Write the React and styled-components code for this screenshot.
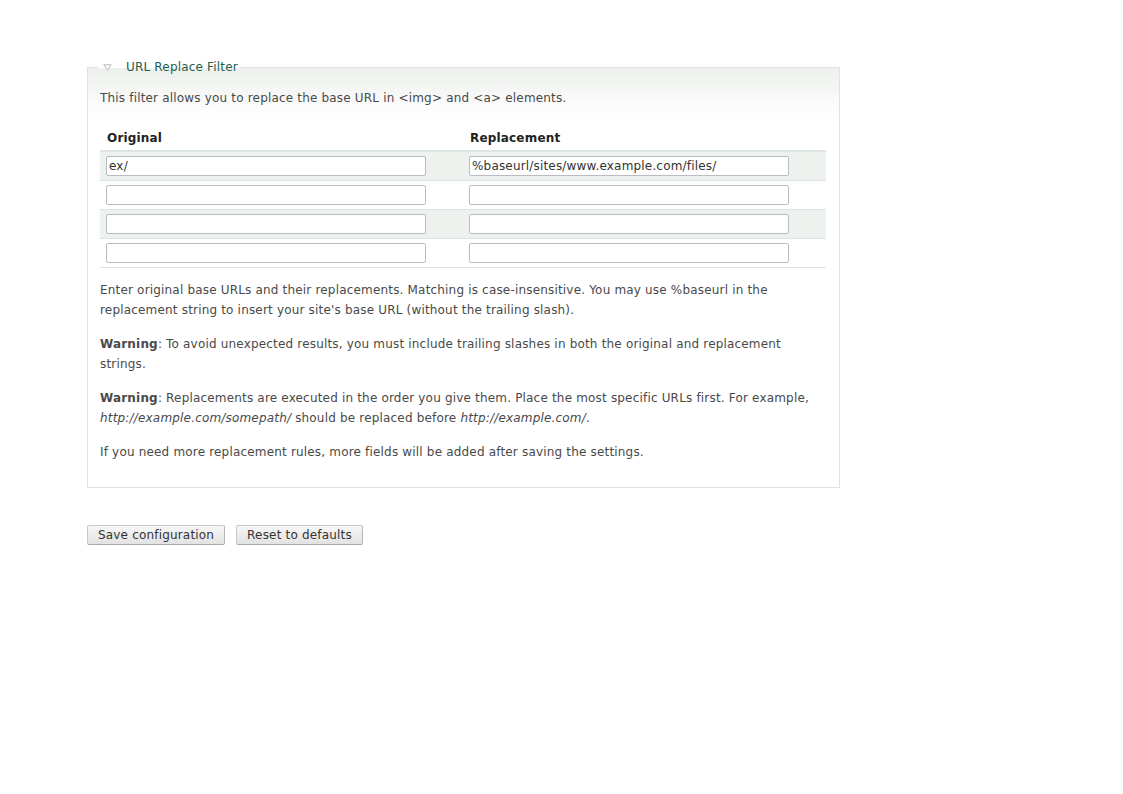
import React from "react";
import styled, { createGlobalStyle } from "styled-components";

const GlobalStyle = createGlobalStyle`
    body {
        margin : 0;
        background : #fff;
        color : #494949;
        font-family : "DejaVu Sans", Verdana, sans-serif;
        font-size : 12px;
        line-height : 20px;
        letter-spacing : 0.18px;
    }
`;

const Page = styled.div`
    padding : 57px 0 0 87px;
    width : 753px;
`;

const Fieldset = styled.fieldset`
    margin : 0;
    padding : 0 13px 11px 12px;
    border : 1px solid #dfe3df;
    background : linear-gradient(#edf0ed 0px, #ffffff 50px);
    min-width : 0;
`;

const Legend = styled.legend`
    margin-left : -2px;
    padding : 0 2px 0 5px;
    display : flex;
    align-items : center;
    gap : 14px;
    color : #1e5e4c;
    line-height : 20px;
`;

const Arrow = () => (
    <svg width="9" height="7" viewBox="0 0 9 7">
        <path d="M0.8 0.8 H8.2 L4.5 6.2 Z" fill="none" stroke="#b4b8b6" strokeWidth="1" />
    </svg>
);

const Text = styled.p`
    margin : ${(props) => props.margin || "0 0 14px"};
`;

const Table = styled.table`
    width : 100%;
    margin : 16px 0 0;
    border-collapse : collapse;
`;

const Th = styled.th`
    text-align : left;
    padding : 4px 7px 2px;
    color : #222;
    font-weight : bold;
    border-bottom : 2px solid #dce5e0;
`;

const Row = styled.tr`
    background : ${(props) => (props.shaded ? "#eef2ef" : "#fff")};
    border-bottom : 1px solid #dde4df;
`;

const Td = styled.td`
    padding : 4px 6px 4px 6px;
    width : ${(props) => props.width || "auto"};
`;

const Input = styled.input`
    box-sizing : border-box;
    width : 320px;
    height : 20px;
    margin : 0;
    padding : 0 2px;
    border : 1px solid #b9bdc1;
    border-radius : 2px;
    font-family : "DejaVu Sans", Verdana, sans-serif;
    font-size : 12px;
    letter-spacing : 0.18px;
    color : #333;
    background : #fff;
    display : block;
`;

const Buttons = styled.div`
    display : flex;
    gap : 11px;
    margin-top : 37px;
`;

const Button = styled.button`
    height : 20px;
    padding : 0 10px;
    font-family : "DejaVu Sans", Verdana, sans-serif;
    font-size : 12px;
    letter-spacing : 0.18px;
    color : #333;
    border : 1px solid #c8c8c8;
    border-bottom-color : #a9a9a9;
    border-right-color : #b5b5b5;
    border-radius : 2px;
    background : linear-gradient(#f7f7f7, #e2e2e2);
`;

const rows = [
    ["ex/", "%baseurl/sites/www.example.com/files/"],
    ["", ""],
    ["", ""],
    ["", ""],
];

const App = () => {
    return (
        <Page>
            <GlobalStyle />
            <Fieldset>
                <Legend>
                    <Arrow />
                    URL Replace Filter
                </Legend>
                <Text margin="11px 0 0">
                    This filter allows you to replace the base URL in &lt;img&gt; and &lt;a&gt; elements.
                </Text>
                <Table>
                    <thead>
                        <tr>
                            <Th>Original</Th>
                            <Th>Replacement</Th>
                        </tr>
                    </thead>
                    <tbody>
                        {rows.map((r, i) => (
                            <Row key={i} shaded={i % 2 === 0}>
                                <Td width="351px">
                                    <Input defaultValue={r[0]} />
                                </Td>
                                <Td>
                                    <Input defaultValue={r[1]} />
                                </Td>
                            </Row>
                        ))}
                    </tbody>
                </Table>
                <Text margin="12px 0 14px">
                    Enter original base URLs and their replacements. Matching is case-insensitive. You may use %baseurl in the replacement string to insert your site's base URL (without the trailing slash).
                </Text>
                <Text>
                    <b>Warning</b>: To avoid unexpected results, you must include trailing slashes in both the original and replacement strings.
                </Text>
                <Text>
                    <b>Warning</b>: Replacements are executed in the order you give them. Place the most specific URLs first. For example, <i>http://example.com/somepath/</i> should be replaced before <i>http://example.com/</i>.
                </Text>
                <Text>
                    If you need more replacement rules, more fields will be added after saving the settings.
                </Text>
            </Fieldset>
            <Buttons>
                <Button>Save configuration</Button>
                <Button>Reset to defaults</Button>
            </Buttons>
        </Page>
    );
};

export default App;
